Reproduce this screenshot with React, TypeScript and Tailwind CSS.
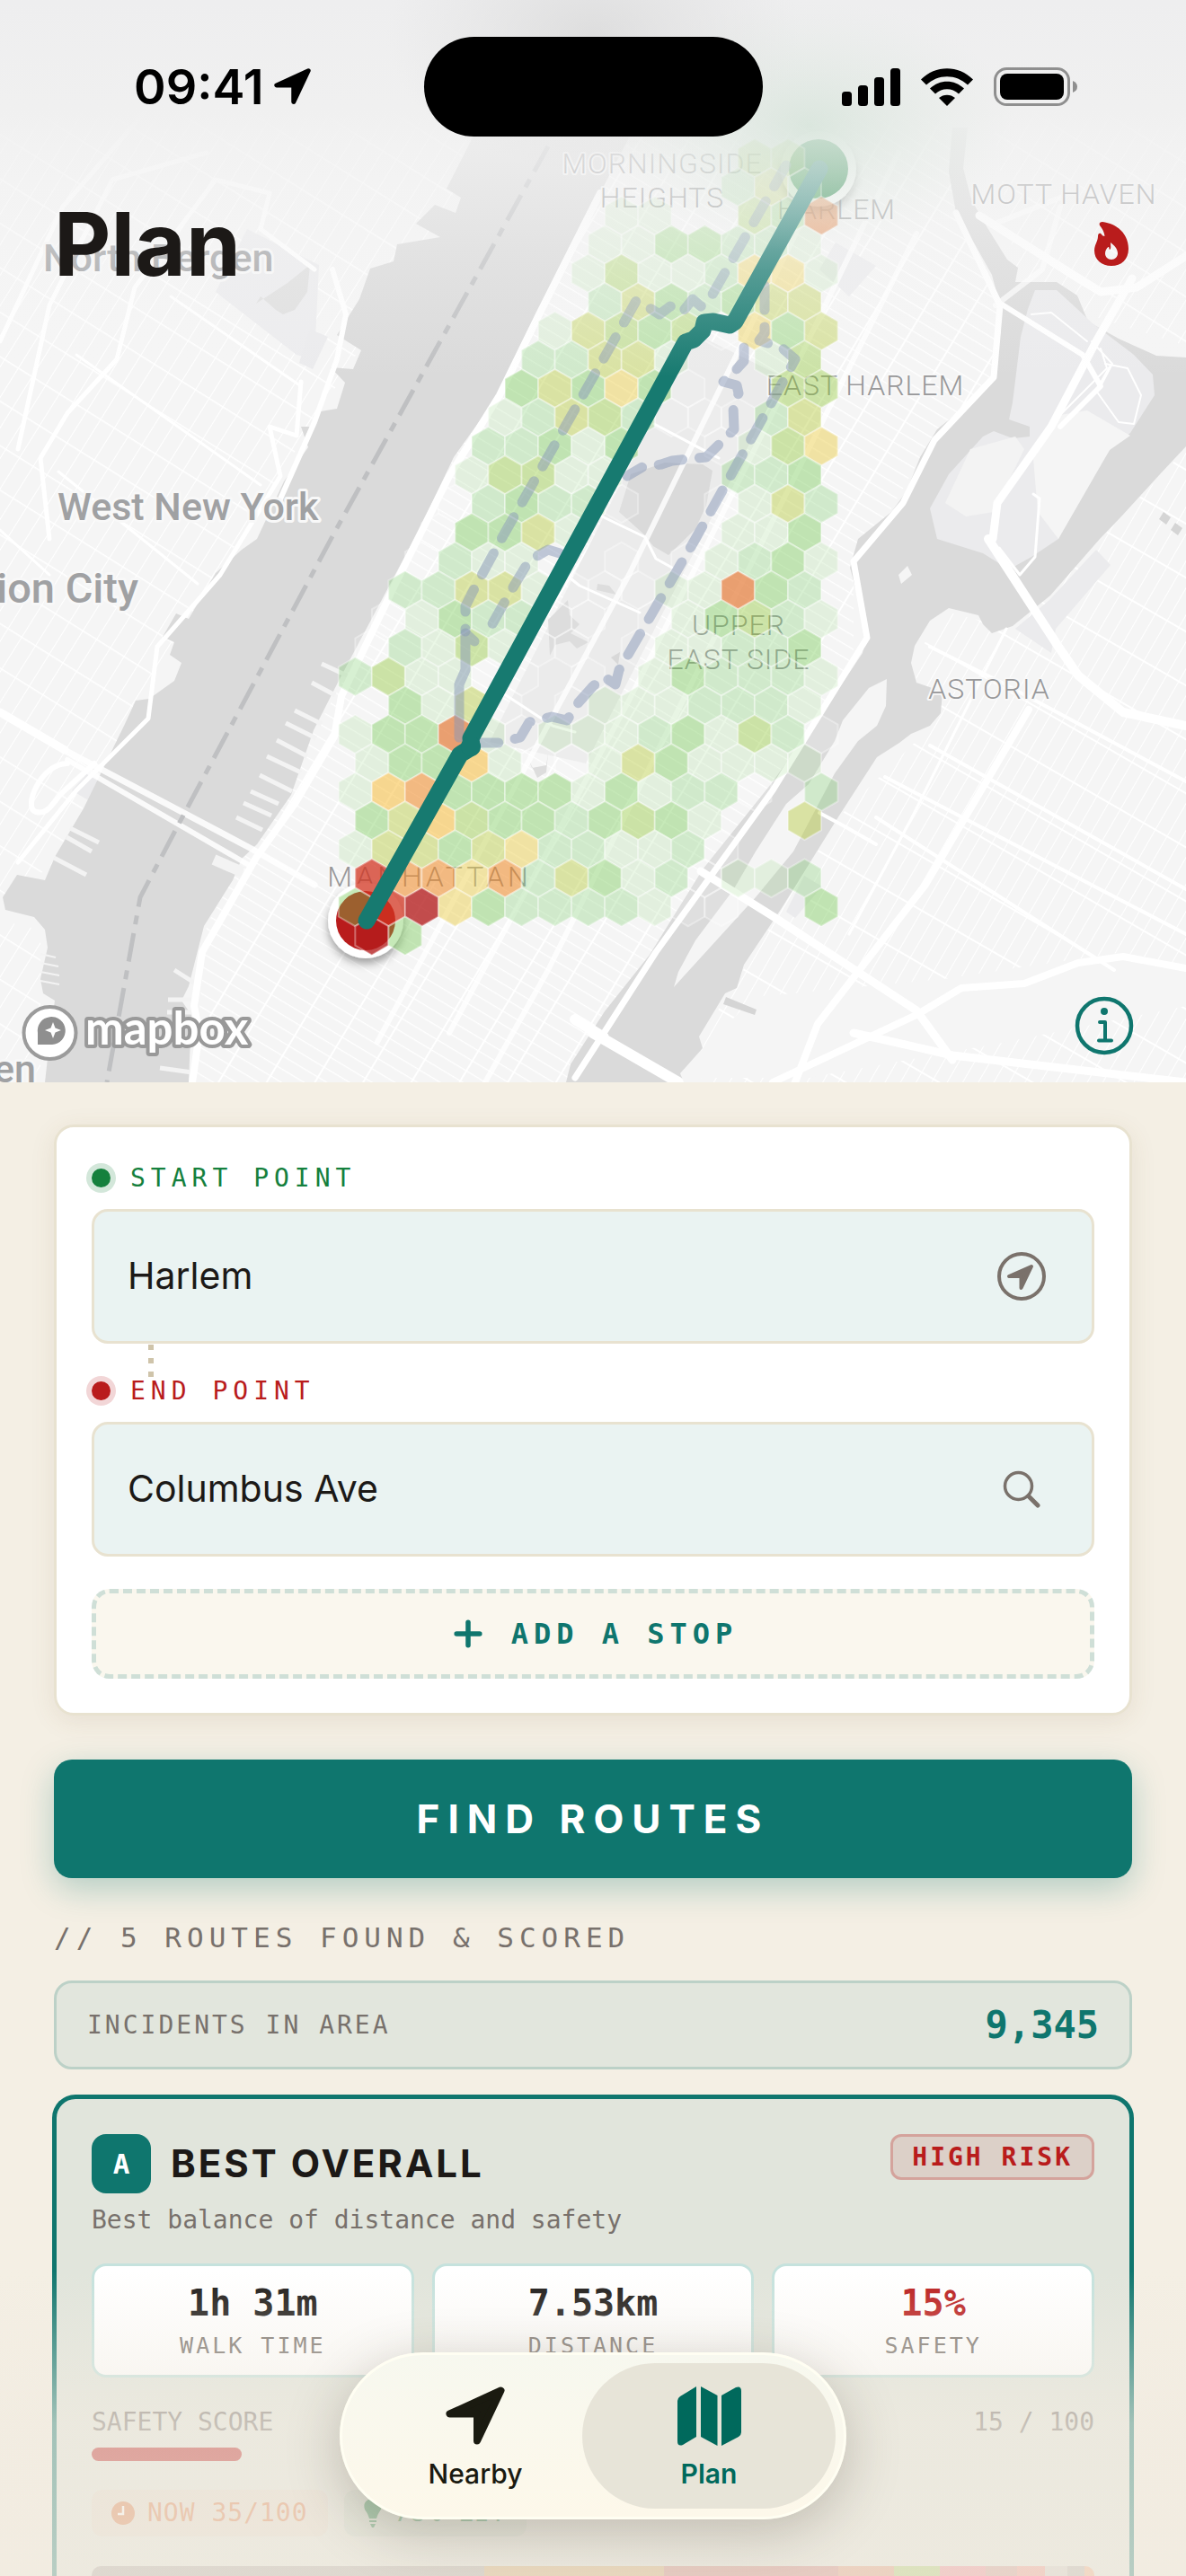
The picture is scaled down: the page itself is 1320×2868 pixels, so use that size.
'use client';

import { Plus } from 'lucide-react';

const HEX_COLORS: Record<string, string> = {
  '0': 'rgba(255,255,255,0.14)',
  '1': 'rgba(160,220,140,0.22)',
  '2': 'rgba(122,205,105,0.3)',
  '3': 'rgba(112,200,77,0.4)',
  '4': 'rgba(140,198,48,0.4)',
  '5': 'rgba(183,203,65,0.45)',
  '6': 'rgba(235,205,65,0.45)',
  '7': 'rgba(247,183,41,0.5)',
  '8': 'rgba(238,134,33,0.55)',
  '9': 'rgba(226,112,40,0.65)',
  a: 'rgba(209,52,32,0.75)',
  b: 'rgba(180,28,28,0.78)',
};

// one string per hex row, west to east; odd rows are shifted by half a cell
const HEX_ROWS = [
  '............44.',
  '...........252',
  '........11..439',
  '.......1133221',
  '.......14112661',
  '.......2532355',
  '......154340635',
  '.....22551..14',
  '.....353630..44',
  '....1254200025',
  '....22313..0146',
  '...14411...223',
  '...023220..0152',
  '..03351....113',
  '..0211..0.01231',
  '.2255100011932',
  '.0132200.013421',
  '0214100.011223',
  '241100.0.132221',
  '.3150.01112221',
  '133910111231420',
  '13371001531111',
  '1783333131220.2',
  '35743323431..5',
  '155356221120',
  'a8868253120112',
  '3ab632222100..3',
  'b3',
];

const HEX_PITCH = 37.05;
const HEX_STEP = 32.07;
const HEX_POINTS = '0,-21.4 18.5,-10.7 18.5,10.7 0,21.4 -18.5,10.7 -18.5,-10.7';

function HexLayer() {
  return (
    <g stroke="#ffffff" strokeOpacity="0.35" strokeWidth="2">
      {HEX_ROWS.map((row, r) =>
        row.split('').map((code, c) => {
          if (code === '.') return null;
          const x = 395.3 + c * HEX_PITCH + (r % 2 ? HEX_PITCH / 2 : 0);
          const y = 176 + r * HEX_STEP;
          return (
            <polygon
              key={`${r}-${c}`}
              points={HEX_POINTS}
              fill={HEX_COLORS[code]}
              transform={`translate(${x} ${y})`}
            />
          );
        })
      )}
    </g>
  );
}

const areaLabels = [
  { text: 'MORNINGSIDE', x: 737, y: 193 },
  { text: 'HEIGHTS', x: 737, y: 231 },
  { text: 'HARLEM', x: 931, y: 244 },
  { text: 'MOTT HAVEN', x: 1184, y: 227 },
  { text: 'EAST HARLEM', x: 963, y: 440 },
  { text: 'UPPER', x: 822, y: 707 },
  { text: 'EAST SIDE', x: 822, y: 745 },
  { text: 'ASTORIA', x: 1101, y: 778 },
];

function CityMap() {
  return (
    <svg
      className="block h-full w-full"
      viewBox="0 0 1320 1205"
      preserveAspectRatio="xMidYMid slice"
      role="img"
      aria-label="Route map of Manhattan"
    >
      <defs>
        <pattern id="blocksWest" width="46" height="13" patternUnits="userSpaceOnUse" patternTransform="rotate(31)">
          <path d="M0 0H46" stroke="#fff" strokeWidth="2.4" />
          <path d="M0 0V13" stroke="#fff" strokeWidth="4" />
        </pattern>
        <pattern id="blocksNJ" width="18" height="42" patternUnits="userSpaceOnUse" patternTransform="rotate(32)">
          <path d="M0 0H18" stroke="#fff" strokeWidth="3" />
          <path d="M0 0V42" stroke="#fff" strokeWidth="2" />
        </pattern>
        <pattern id="blocksQueens" width="15" height="52" patternUnits="userSpaceOnUse" patternTransform="rotate(30)">
          <path d="M0 0H15" stroke="#fff" strokeWidth="4" />
          <path d="M0 0V52" stroke="#fff" strokeWidth="2" />
        </pattern>
        <linearGradient id="topFade" x1="0" y1="0" x2="0" y2="1">
          <stop offset="0" stopColor="#eeeeef" stopOpacity="1" />
          <stop offset="0.3" stopColor="#f0f0f0" stopOpacity="0.98" />
          <stop offset="0.38" stopColor="#f1f1f1" stopOpacity="0.8" />
          <stop offset="0.5" stopColor="#f2f2f2" stopOpacity="0.6" />
          <stop offset="0.72" stopColor="#f3f3f3" stopOpacity="0.28" />
          <stop offset="1" stopColor="#f5f5f5" stopOpacity="0" />
        </linearGradient>
        <radialGradient id="glow">
          <stop offset="0" stopColor="#b9d6c1" stopOpacity="0.4" />
          <stop offset="1" stopColor="#d6e4d8" stopOpacity="0" />
        </radialGradient>
        <radialGradient id="waterGlow">
          <stop offset="0" stopColor="#d6d6d6" stopOpacity="0.7" />
          <stop offset="1" stopColor="#dedede" stopOpacity="0" />
        </radialGradient>
        <filter id="pinShadow" x="-50%" y="-50%" width="200%" height="200%">
          <feDropShadow dx="0" dy="6" stdDeviation="5" floodOpacity="0.35" />
        </filter>
      </defs>

      <rect width="1320" height="1205" fill="#f5f5f5" />

      {/* street grids */}
      <path d="M0 0H560L500 230 330 500 190 720 60 960 0 1010Z" fill="url(#blocksNJ)" />
      <path d="M0 1025 45 1035V1205H0Z" fill="url(#blocksNJ)" />
      <path d="M700 0H1060V210L1110 340V410L1030 500 950 640V740L660 1160 630 1205H215L230 1030 470 600Z" fill="url(#blocksWest)" />
      <path d="M1085 0H1320V385L1210 350 1130 300Z" fill="url(#blocksNJ)" />
      <path d="M1320 500 1225 600 1125 700 1050 680 1015 740 1035 810 935 908 780 1155V1205H1320Z" fill="url(#blocksQueens)" />
      <path d="M840 1110 1050 1090 1250 1060 1320 1075V1120L1120 1160 900 1200H780V1170Z" fill="#f5f5f5" />

      {/* parks */}
      <path d="M775 372 872 420 652 850 545 826Z" fill="#ebebeb" />
      <path d="M930 270 975 296 945 330 912 300Z" fill="#ececee" />
      <path d="M275 255 355 295 350 400 330 395 240 325Z" fill="#ececee" />
      <path d="M345 366 365 375 348 411 333 404Z" fill="#ebebed" />
      <path d="M285 338 320 315 345 295 342 325 328 345 315 350 307 345 290 330Z" fill="#dfdfdf" />
      <path d="M80 880 100 858 120 885 105 895Z" fill="#ebebed" />

      {/* rivers */}
      <path
        fill="#dadada"
        d="M600 0 522 161 497 210 513 220 507 237 484 228 463 249 490 264 442 272 438 291 412 299 400 333 375 373 402 390 393 411 368 409 384 426 375 455 351 459V475H335L343 498 316 536 286 600 269 612 240 638 210 689 196 683 181 709 194 715 189 729 202 738 194 758 166 778 151 780 139 806 120 845 93 900 61 954 50 980 19 974 3 999 6 1013 38 1021 50 1035 53 1055 45 1090 48 1106 61 1114 57 1142 50 1205H210L213 1130 202 1114 210 1098 227 1031 259 980 269 956 286 940 324 885 349 813 379 754 461 600 467 589 505 509 560 432 602 344 660 230 780 0Z"
      />
      <path
        fill="#dadada"
        d="M1060 142 1056 191 1064 237 1085 272 1104 306 1114 344V367L1108 413 1085 444 1043 478 1024 509 1009 547 992 570 955 600 946 632 965 701 960 727 934 766 887 833 858 873 782 968 723 1063 673 1126 635 1185 630 1205H761L757 1195 782 1167 778 1154 807 1106 820 1100 828 1074 870 1011 934 908 976 843 1001 827 1014 817 1035 808 1047 794 1049 770 1020 760 1014 738 1018 719 1035 691 1056 677 1089 685 1094 695 1104 705 1127 697 1169 663 1224 600 1249 574 1291 528 1320 497V398L1287 396 1245 377 1211 358 1199 329 1176 314H1130L1133 298 1121 289 1098 252 1081 222 1072 187 1077 142Z"
      />
      {/* islands */}
      <path
        fill="#ebebed"
        d="M1152 323H1176L1199 344 1216 360 1262 395 1283 417 1285 440 1258 482 1235 501 1190 574 1178 600 1148 620 1123 634 1094 616 1043 600 1035 566 1056 528 1094 486 1106 480 1127 488 1146 486V475L1123 467 1127 448 1136 375 1144 344Z"
      />
      <path d="M1180 462 1210 457 1258 485 1235 501 1178 600 1155 570 1150 510Z" fill="#f5f5f5" />
      <path d="M1080 500 1130 486 1140 500 1106 570 1075 575 1052 560Z" fill="#f3f3f3" />
      <path
        fill="#f5f5f5"
        d="M987 756 986 786 976 808 955 825 929 861 883 948 841 999 750 1099 755 1082 774 1047 816 991 841 948 875 895 900 873 929 825 938 802 967 766Z"
      />
      <path d="M1010 630 1015 640 1003 650 1000 640ZM1000 648 1010 632" fill="#f5f5f5" />
      <path d="M702 528 740 515 782 517 793 524 786 563 774 589 744 618 727 608 718 596 689 570Z" fill="#dadada" />
      <path d="M625 675 632 668 634 685 645 695 635 705 655 715 642 722 634 714 618 718 612 730 610 690Z" fill="#d8d8d8" />
      <path d="M665 650 678 652 686 662 664 657ZM680 732 690 726 688 740ZM588 845 592 855 608 852 610 838 608 860 598 866Z" fill="#d8d8d8" />
      <path d="M1220 612 1236 629 1175 700 1170 727 1130 700 1168 668Z" fill="#ebebed" />
      <path d="M895 975 915 987 885 1022 875 1015Z" fill="#ebebed" />
      <path d="M808 1110 842 1124 840 1130 805 1118ZM1295 570l8 6-5 8-8-6ZM1308 582l8 6-5 8-8-6Z" fill="#d5d5d5" />

      {/* piers */}
      <g stroke="#f3f3f3" strokeWidth="5">
        <path d="M358 739 388 753M347 760 373 774M328 791 358 806M318 805 352 822M308 824 342 842M297 842 335 860M289 863 325 881M279 881 310 895M271 894 302 908M263 910 292 924" />
        <path d="M238 957 270 971" strokeWidth="12" />
        <path d="M78 922 110 938M74 932 102 948M60 955 96 974M194 1080 216 1094M187 1113H215M186 1127H215M178 1189 214 1194" />
        <path d="M45 1062 62 1066M45 1072 65 1076M45 1082 66 1086M45 1092 66 1096" strokeWidth="2" />
      </g>

      {/* main roads and bridges */}
      <g fill="none" stroke="#fff" strokeLinecap="round" strokeLinejoin="round">
        <path d="M0 793 72 835" strokeWidth="9" />
        <path d="M72 835 280 945 350 985" strokeWidth="7" strokeOpacity="0.85" />
        <path d="M75 846 275 962" strokeWidth="6" strokeOpacity="0.85" />
        <path d="M75 850C45 850 25 900 40 904S60 890 72 880L105 850" strokeWidth="6" />
        <path d="M668 215 600 350 556 440 500 530 440 650 380 775 372 820 328 895 285 955 225 1060 216 1120 222 1150 214 1205" strokeWidth="8" />
        <path d="M780 970 860 1020 1020 1125 1060 1180" strokeWidth="9" />
        <path d="M660 1150 755 1205M640 1135 672 1155" strokeWidth="12" />
        <path d="M1100 600 1178 720 1200 752 1250 793 1320 808" strokeWidth="10" />
        <path d="M1260 310 1220 380 1170 475 1110 560 1105 600" strokeWidth="9" />
        <path d="M1090 240 1200 310 1225 325 1265 320 1320 285" strokeWidth="9" />
        <path d="M1112 337 1205 395 1225 430 1180 475" strokeWidth="6" />
        <path d="M1225 388 1232 410 1180 462M1215 380 1238 405 1225 430" strokeWidth="2" />
        <path d="M1148 350 1170 348 1210 380M1230 405 1255 410 1270 440 1262 472 1245 470 1220 435 1235 408" strokeWidth="2" />
        <path d="M1150 550 1157 555 1152 620 1135 640 1112 610" strokeWidth="3" />
        <path d="M1320 1078 1250 1065 1200 1072 1140 1095 1070 1100 1020 1130 860 1205" strokeWidth="8" />
        <path d="M950 1150 1060 1175 1320 1205" strokeWidth="9" />
        <path d="M1145 790 1030 985 910 1140 885 1205" strokeWidth="8" />
        <path d="M1120 700 1015 910 945 1040" strokeWidth="3" />
        <path d="M1035 720 1115 760 1320 870M985 865 1320 1040M975 910 1240 1080M1035 830 1320 990" strokeWidth="4" />
        <path d="M0 380 70 230 165 120M20 500 55 340 125 200 230 170M55 600 45 510 75 460 130 400 150 320 240 200 300 215 290 255 350 300" strokeWidth="5" />
        <path d="M0 590 55 640M65 525 220 650M85 395 290 540M190 330 335 430" strokeWidth="3" />
        <path d="M335 425 330 485 300 475 312 530 245 640 175 720 165 800 85 880 20 960" strokeWidth="5" />
        <path d="M370 300 385 350 375 400 350 470 310 560" strokeWidth="6" />
        <path d="M915 200 700 640 560 900 420 1160M1000 170 880 420 700 780 500 1150M1020 260 800 700 610 1080 540 1205" strokeWidth="6" strokeOpacity="0.8" />
        <path d="M1064 237 1113 340 1106 420 1040 490 1005 560 950 625 965 710 860 880 730 1060 640 1200" strokeWidth="7" />
        <path d="M728 472 800 510M670 575 718 598 730 622 748 632M630 640 645 652 712 682M560 772 615 808 640 815" strokeWidth="3" />
        <path d="M912 905 940 920 975 940" strokeWidth="4" />
        <path d="M1105 250 1180 220M1108 340 1160 300 1180 230" strokeWidth="6" strokeOpacity="0.7" />
      </g>

      {/* state line */}
      <path
        d="M610 163 370 597 206 904 156 999 119 1205"
        fill="none"
        stroke="#bfc0c2"
        strokeWidth="5"
        strokeDasharray="32 10 10 10"
      />

      {/* place names */}
      <g
        fontFamily="Roboto, sans-serif"
        fontWeight="500"
        fill="#a0a1a3"
        stroke="#f8f8f8"
        strokeWidth="6"
        strokeLinejoin="round"
        paintOrder="stroke"
      >
        <text x="48" y="302" fontSize="43">North Bergen</text>
        <text x="64" y="579" fontSize="43">West New York</text>
        <text x="154" y="671" fontSize="47" textAnchor="end">Union City</text>
        <text x="40" y="1205" fontSize="43" textAnchor="end">Hoboken</text>
      </g>
      <g
        fontFamily="Roboto, sans-serif"
        fontWeight="300"
        fontSize="32"
        letterSpacing="1"
        fill="#98989a"
        stroke="#f8f8f8"
        strokeWidth="4"
        strokeLinejoin="round"
        paintOrder="stroke"
        textAnchor="middle"
      >
        {areaLabels.map((l) => (
          <text key={l.text} x={l.x} y={l.y}>{l.text}</text>
        ))}
        <text x="478" y="987" letterSpacing="4">MANHATTAN</text>
      </g>

      {/* pins sit below the risk hexes */}
      <g filter="url(#pinShadow)">
        <circle cx="407" cy="1025" r="42" fill="#fff" />
        <circle cx="911" cy="188" r="42" fill="#fff" />
      </g>
      <circle cx="407" cy="1025" r="33" fill="#b91c1c" />
      <circle cx="911" cy="188" r="33" fill="#15803d" />

      <HexLayer />

      {/* alternative routes */}
      <g
        fill="none"
        stroke="#8797b8"
        strokeOpacity="0.5"
        strokeWidth="11"
        strokeLinecap="round"
        strokeLinejoin="round"
        strokeDasharray="27 19"
      >
        <path d="M875 184 790 333 780 341 771 333 759 348 746 341 734 350 723 343 708 335 668 406 558 600 526 659 518 675V703" />
        <path d="M623 616 610 612 589 624 568 659 541 707" />
        <path d="M528 714 518 705V746L511 762V821" strokeDasharray="none" />
        <path d="M851 318V371L845 379 870 387 885 400 877 415 774 600 689 746 685 762 673 754 660 764 644 782 631 802 614 798 589 804 579 821 556 827 509 827" />
        <path d="M828 387V402L818 413 805 425 820 429 822 438 816 452 817 478 786 509 748 513 736 517 715 520 698 530" />
      </g>

      <path
        d="M912 188 818 358 812 362 794 358 784 359 782 368 772 378 763 381 524 822 525 832 512 840 408 1025"
        fill="none"
        stroke="#177a70"
        strokeWidth="19"
        strokeLinecap="round"
        strokeLinejoin="round"
      />
      <circle cx="524" cy="831" r="11" fill="#177a70" />

      <rect width="1320" height="420" fill="url(#topFade)" />
      <ellipse cx="900" cy="140" rx="230" ry="140" fill="url(#glow)" />
      <ellipse cx="660" cy="40" rx="230" ry="150" fill="url(#waterGlow)" />

      {/* map attribution */}
      <circle cx="55.5" cy="1150" r="29" fill="#fff" stroke="#9b9b9b" strokeWidth="4" />
      <path d="M42 1163V1150A15.5 15.5 0 1 1 58 1163Z" fill="#8f8f8f" />
      <path d="M59 1138 61.500 1144.500 68 1147 61.500 1149.500 59 1156 56.500 1149.500 50 1147 56.500 1144.500Z" fill="#fff" />
      <text
        x="95"
        y="1163"
        fontFamily="Lato, sans-serif"
        fontWeight="700"
        fontSize="51"
        fill="#fff"
        stroke="#999999"
        strokeWidth="8"
        strokeLinejoin="round"
        paintOrder="stroke"
      >
        mapbox
      </text>
    </svg>
  );
}

function LocationArrow({ className }: { className?: string }) {
  return (
    <svg className={className} viewBox="0 0 66 66" fill="currentColor" stroke="currentColor" aria-hidden="true">
      <path d="M61.500 4.500 4.500 30.500H35V60.500Z" strokeWidth="8" strokeLinejoin="round" />
    </svg>
  );
}

function MapIcon({ className }: { className?: string }) {
  return (
    <svg className={className} viewBox="0 0 71 66" fill="currentColor" aria-hidden="true">
      <path d="M21 0V56L6 65Q0 67 0 61V16Q0 13 3 11Z" />
      <path d="M26 0 44.500 10V66L26 56Z" />
      <path d="M49 10 65 1Q71-1 71 5V51Q71 54 68 56L49 66Z" />
    </svg>
  );
}

function StatusBar() {
  return (
    <div className="grid grid-cols-[1fr_377px_1fr] items-center pt-[41px] text-black">
      <div className="flex items-center justify-center gap-3 pl-6">
        <span className="text-[54px] leading-[60px] font-semibold">09:41</span>
        <LocationArrow className="size-[41px]" />
      </div>
      <div className="h-[111px] rounded-full bg-black" />
      <div className="flex items-center justify-center gap-[23px] pr-[32px]">
        <svg className="h-[42px] w-[65px]" viewBox="0 0 65 42" aria-label="Signal">
          <rect x="0" y="26" width="11" height="16" rx="3.500" />
          <rect x="18" y="19" width="11" height="23" rx="3.500" />
          <rect x="36" y="10" width="11" height="32" rx="3.500" />
          <rect x="54" y="0" width="11" height="42" rx="3.500" />
        </svg>
        <svg className="h-[42px] w-[58px]" viewBox="0 0 58 42" aria-label="Wi-Fi">
          <path d="M0 12.500C16-4 42-4 58 12.500L52 18.500C39 6 19 6 6 18.500Z" />
          <path d="M10 22.500C21 12 37 12 48 22.500L42 28.500C34.500 21.500 23.500 21.500 16 28.500Z" />
          <path d="M20 33C25 28.500 33 28.500 38 33L29 42Z" />
        </svg>
        <svg className="h-[43px] w-[94px]" viewBox="0 0 94 43" aria-label="Battery">
          <rect x="1.500" y="1.500" width="82" height="40" rx="13" fill="none" stroke="#8f8f8f" strokeWidth="3" />
          <rect x="7" y="7" width="71" height="29" rx="8" />
          <path d="M88 15Q93 17 93 21.500T88 28Z" fill="#8f8f8f" />
        </svg>
      </div>
    </div>
  );
}

const stats = [
  { label: 'WALK TIME', value: '1h 31m', color: 'text-[#1c1917]' },
  { label: 'DISTANCE', value: '7.53km', color: 'text-[#1c1917]' },
  { label: 'SAFETY', value: '15%', color: 'text-[#b91c1c]' },
];

// risk along the route, width in percent
const segments = [
  { width: 39.2, color: '#a8a29e' },
  { width: 17.9, color: '#d4a45f' },
  { width: 17.4, color: '#c9706a' },
  { width: 5.5, color: '#dd8b68' },
  { width: 4.6, color: '#a3c95f' },
  { width: 4.6, color: '#ef7b88' },
  { width: 3.1, color: '#cb8d85' },
  { width: 2.8, color: '#ef8b80' },
  { width: 2.2, color: '#cdc8c2' },
  { width: 1.7, color: '#aea9a4' },
  { width: 1, color: '#f2a67a' },
];

function PointField({ id, label, value, tone, icon }: {
  id: string;
  label: string;
  value: string;
  tone: 'start' | 'end';
  icon: React.ReactNode;
}) {
  return (
    <div>
      <label
        htmlFor={id}
        className={`flex h-[35px] items-center gap-[22px] font-['DejaVu_Sans_Mono',monospace] text-[28px] tracking-[6px] ${
          tone === 'start' ? 'text-[#15803d]' : 'text-[#b91c1c]'
        }`}
      >
        <span
          className={`size-[21px] rounded-full ring-6 ${
            tone === 'start' ? 'bg-[#15803d] ring-[#d3e7da]' : 'bg-[#b91c1c] ring-[#f2d6d7]'
          }`}
        />
        {label}
      </label>
      <div className="mt-[17px] flex h-[150px] items-center rounded-[18px] border-3 border-[#e8e2d0] bg-[#eaf3f2] pr-[42px] pl-[37px]">
        <input
          id={id}
          defaultValue={value}
          className="min-w-0 flex-1 bg-transparent text-[41px] text-[#1c1917] outline-none"
        />
        <button type="button" aria-label={`Pick ${label.toLowerCase()}`} className="flex w-[72px] justify-center text-[#7a716b]">
          {icon}
        </button>
      </div>
    </div>
  );
}

export default function App() {
  return (
    <div className="relative h-screen overflow-hidden bg-[#f4efe4] font-['Inter',sans-serif] text-[#1c1917]">
      <section className="relative h-[1205px]">
        <CityMap />
        <header className="absolute inset-x-0 top-0">
          <StatusBar />
          <div className="flex items-center justify-between pt-[60px] pr-[63px] pl-[60px]">
            <h1 className="text-[98px] leading-[120px] font-bold">Plan</h1>
            <button type="button" aria-label="Toggle heat map" className="text-[#b91c1c]">
              <svg className="h-[50px] w-[39px]" viewBox="0 0 39 50" fill="currentColor" fillRule="evenodd">
                <path d="M9 0C26 2 38 14 38 30C38 42 30 49 19 49C8 49 0 42 0 32C0 25 4 22 4 16C4 12 7 12 8 14Q9 16 11.500 16C11 11 9 8 6 4C5 2 6 0 9 0ZM18 23C18 26 19 30 17 31C16 30 17 28 15.500 28C14 29 12 32 12 35C12 39 15 42 19 42C23 42 26 39 26 35C26 30 22 26 18 23Z" />
              </svg>
            </button>
          </div>
        </header>
        <button type="button" aria-label="Map info" className="absolute right-[57px] bottom-[29px] text-[#0f766e]">
          <svg className="size-[68px]" viewBox="0 0 68 68" fill="none" stroke="currentColor" strokeWidth="4.500">
            <circle cx="34" cy="34" r="30" />
            <circle cx="34" cy="18" r="4" fill="currentColor" stroke="none" />
            <path d="M29 30H35V50M28 50.500H42" strokeWidth="4" strokeLinecap="round" strokeLinejoin="round" />
          </svg>
        </button>
      </section>

      <main className="px-[60px] pt-[47px]">
        <section className="rounded-[22px] border-3 border-[#e8e2d0] bg-white px-[39px] pt-[39px] pb-[38px] shadow-[0_6px_28px_rgba(120,90,50,0.10)]">
          <PointField
            id="start"
            label="START POINT"
            value="Harlem"
            tone="start"
            icon={
              <svg className="size-[54px]" viewBox="0 0 54 54" fill="none" stroke="currentColor">
                <circle cx="27" cy="27" r="25" strokeWidth="4" />
                <path d="M38 16 13 27H26.500V40Z" fill="currentColor" strokeWidth="4" strokeLinejoin="round" />
              </svg>
            }
          />
          <div className="relative h-[35px]">
            <div className="absolute top-0 left-[63px] flex flex-col gap-[9px] pt-px">
              <span className="size-[6px] bg-[#cfc4aa]" />
              <span className="size-[6px] bg-[#cfc4aa]" />
              <span className="size-[6px] bg-[#cfc4aa]" />
            </div>
          </div>
          <PointField
            id="end"
            label="END POINT"
            value="Columbus Ave"
            tone="end"
            icon={
              <svg className="size-[42px]" viewBox="0 0 42 42" fill="none" stroke="currentColor" strokeLinecap="round">
                <circle cx="17.500" cy="17.500" r="15" strokeWidth="3.500" />
                <path d="M29 29 39 39" strokeWidth="5" />
              </svg>
            }
          />
          <button
            type="button"
            className="mt-[36px] flex h-[100px] w-full items-center justify-center gap-[26px] rounded-[20px] border-5 border-dashed border-[#cfdfd7] bg-[#faf7ee] font-['DejaVu_Sans_Mono',monospace] text-[32px] font-bold tracking-[6px] text-[#0f766e]"
          >
            <Plus size={44} strokeWidth={3} />
            ADD A STOP
          </button>
        </section>

        <button
          type="button"
          className="mt-[49px] h-[132px] w-full rounded-[20px] bg-[#0f766e] text-[44px] font-bold tracking-[9px] text-white shadow-[0_12px_36px_rgba(15,118,110,0.28)]"
        >
          FIND ROUTES
        </button>

        <h2 className="mt-[46px] font-['DejaVu_Sans_Mono',monospace] text-[31px] leading-[40px] tracking-[6px] text-[#78716c]">
          // 5 ROUTES FOUND &amp; SCORED
        </h2>

        <div className="mt-[28px] flex h-[99px] items-center justify-between rounded-[20px] border-3 border-[#bcd1c7] bg-[#e2e6dd] px-[34px] font-['DejaVu_Sans_Mono',monospace]">
          <span className="text-[28px] tracking-[3px] text-[#78716c]">INCIDENTS IN AREA</span>
          <span className="text-[42px] font-bold text-[#0f766e]">9,345</span>
        </div>

        <article className="mt-[30px] h-[700px] rounded-[24px] border-3 border-[#0f766e] bg-[#e1e5dc] px-[39px] pt-[39px] font-['DejaVu_Sans_Mono',monospace] ring-2 ring-[#0f766e]">
          <div className="flex items-start justify-between">
            <div className="flex items-center gap-[22px]">
              <span className="flex size-[66px] items-center justify-center rounded-[16px] bg-[#0f766e] text-[31px] font-bold text-white">
                A
              </span>
              <h3 className="font-['Inter',sans-serif] text-[42px] leading-[50px] font-bold tracking-[3px]">BEST OVERALL</h3>
            </div>
            <span className="flex h-[51px] items-center rounded-[12px] border-3 border-[#d4a39c] bg-[#dcd0c8] px-[21px] text-[28px] font-bold tracking-[3px] text-[#b91c1c]">
              HIGH RISK
            </span>
          </div>
          <p className="mt-[12px] text-[28px] leading-[36px] text-[#78716c]">Best balance of distance and safety</p>

          <dl className="mt-[30px] grid grid-cols-3 gap-[20px]">
            {stats.map((stat) => (
              <div
                key={stat.label}
                className="flex h-[127px] flex-col-reverse items-center justify-center gap-[8px] rounded-[16px] border-3 border-[#c5e2dd] bg-white"
              >
                <dt className="text-[25px] leading-[32px] tracking-[3px] text-[#78716c]">{stat.label}</dt>
                <dd className={`text-[40px] leading-[48px] font-bold ${stat.color}`}>{stat.value}</dd>
              </div>
            ))}
          </dl>

          <div className="mt-[32px] flex justify-between text-[28px] leading-[36px] text-[#78716c]">
            <span>SAFETY SCORE</span>
            <span>15 / 100</span>
          </div>
          <div className="mt-[10px] h-[15px]">
            <div className="h-full w-[15%] rounded-full bg-[#b91c1c]" />
          </div>

          <div className="mt-[32px] flex gap-[18px] text-[28px]">
            <span className="flex h-[52px] items-center gap-[14px] rounded-[12px] bg-[#e2d9cc] px-[22px] tracking-[1px] text-[#d97742]">
              <svg className="size-[26px]" viewBox="0 0 26 26" aria-hidden="true">
                <circle cx="13" cy="13" r="13" fill="currentColor" />
                <path d="M13 5V14H7" fill="none" stroke="#fff" strokeWidth="2.500" />
              </svg>
              NOW 35/100
            </span>
            <span className="flex h-[52px] items-center gap-[14px] rounded-[12px] bg-[#cddbcd] px-[22px] tracking-[1px] text-[#15803d]">
              <svg className="h-[32px] w-[20px]" viewBox="0 0 20 32" fill="currentColor" aria-hidden="true">
                <path d="M10 0C20 0 22 9 17 15Q15 18 14 22H6Q5 18 3 15C-2 9 0 0 10 0ZM6 24H14V26H6ZM7 28H13L11 32H9Z" />
              </svg>
              78% LIT
            </span>
          </div>

          <div className="mt-[33px] flex h-[30px] overflow-hidden rounded-[10px]">
            {segments.map((s, i) => (
              <div key={i} style={{ width: `${s.width}%`, backgroundColor: s.color }} />
            ))}
          </div>
        </article>
      </main>

      <div className="pointer-events-none absolute inset-x-0 bottom-0 h-[340px] bg-linear-to-b from-[#f1ebe0]/0 via-[#f1ebe0]/65 to-[#f1ebe0]/75" />

      <nav className="absolute bottom-[63px] left-1/2 flex h-[186px] w-[564px] -translate-x-1/2 rounded-full border-3 border-[#fffef2] bg-linear-to-b from-[#f7f8ef] to-[#fdf8ea] p-[9px] text-[30px] leading-[38px] shadow-[0_14px_60px_rgba(60,50,40,0.25)]">
        <a href="#nearby" className="flex flex-1 flex-col items-center justify-center gap-[12px] pt-[6px] pl-[20px] font-medium text-[#1a1a10]">
          <LocationArrow className="size-[66px]" />
          Nearby
        </a>
        <a
          href="#plan"
          aria-current="page"
          className="flex w-[282px] flex-col items-center justify-center gap-[12px] rounded-full bg-[#e7e4d8] pt-[6px] font-semibold text-[#00695c]"
        >
          <MapIcon className="h-[66px] w-[71px]" />
          Plan
        </a>
      </nav>
    </div>
  );
}
